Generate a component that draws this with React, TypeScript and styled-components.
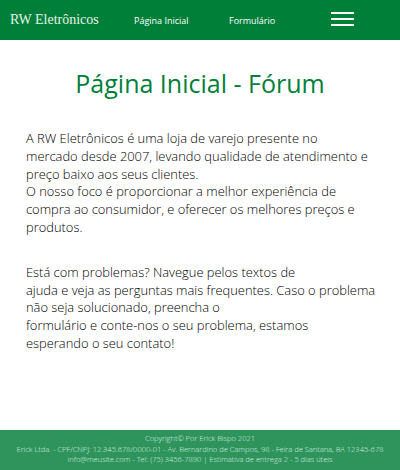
import styled, { createGlobalStyle } from 'styled-components';

const Global = createGlobalStyle`
  html, body {
    margin: 0;
    padding: 0;
    background: #fff;
  }
  body {
    font-family: "Open Sans", sans-serif;
  }
`;

const Page = styled.div`
  width: 400px;
  height: 470px;
  display: flex;
  flex-direction: column;
  overflow: hidden;
`;

const Navbar = styled.nav`
  height: 40px;
  background: #007f39;
  display: flex;
  align-items: center;
  color: #fff;
`;

const Brand = styled.span`
  font-family: "Liberation Serif", serif;
  font-size: 14px;
  margin-left: 10px;
  width: 124px;
  color: #e6f2ea;
`;

const NavLink = styled.a`
  font-size: 9px;
  color: #fff;
  width: 95px;
`;

const Burger = styled.div`
  display: flex;
  flex-direction: column;
  gap: 4px;
  margin: 0 0 3px 7px;

  span {
    display: block;
    width: 23px;
    height: 2px;
    background: #fff;
  }
`;

const Main = styled.main`
  flex: 1;
  padding: 0 20px;
`;

const Title = styled.h1`
  margin: 26px 0 30px;
  font-size: 25px;
  font-weight: 400;
  line-height: 34px;
  text-align: center;
  color: #007f39;
`;

const Paragraph = styled.p`
  margin: 0 0 27px;
  padding-left: 6px;
  font-size: 12.9px;
  font-weight: 300;
  line-height: 17.8px;
  color: #000;
`;

const Footer = styled.footer`
  height: 40px;
  background: #2e945c;
  color: #dcefe3;
  font-size: 7.5px;
  font-weight: 300;
  line-height: 10.5px;
  text-align: center;
  padding-top: 3px;
  box-sizing: border-box;
  white-space: nowrap;
`;

export default function App() {
  return (
    <Page>
      <Global />
      <Navbar>
        <Brand>RW Eletrônicos</Brand>
        <NavLink>Página Inicial</NavLink>
        <NavLink>Formulário</NavLink>
        <Burger>
          <span />
          <span />
          <span />
        </Burger>
      </Navbar>
      <Main>
        <Title>Página Inicial - Fórum</Title>
        <Paragraph>
          A RW Eletrônicos é uma loja de varejo presente no<br />
          mercado desde 2007, levando qualidade de atendimento e<br />
          preço baixo aos seus clientes.<br />
          O nosso foco é proporcionar a melhor experiência de<br />
          compra ao consumidor, e oferecer os melhores preços e<br />
          produtos.
        </Paragraph>
        <Paragraph>
          Está com problemas? Navegue pelos textos de<br />
          ajuda e veja as perguntas mais frequentes. Caso o problema<br />
          não seja solucionado, preencha o<br />
          formulário e conte-nos o seu problema, estamos<br />
          esperando o seu contato!
        </Paragraph>
      </Main>
      <Footer>
        <div>Copyright© Por Erick Bispo 2021</div>
        <div>Erick Ltda. - CPF/CNPJ: 12.345.678/0000-01 - Av. Bernardino de Campos, 98 - Feira de Santana, BA 12345-678</div>
        <div>info@meusite.com - Tel: (75) 3456-7890 | Estimativa de entrega 2 - 5 dias úteis</div>
      </Footer>
    </Page>
  );
}
